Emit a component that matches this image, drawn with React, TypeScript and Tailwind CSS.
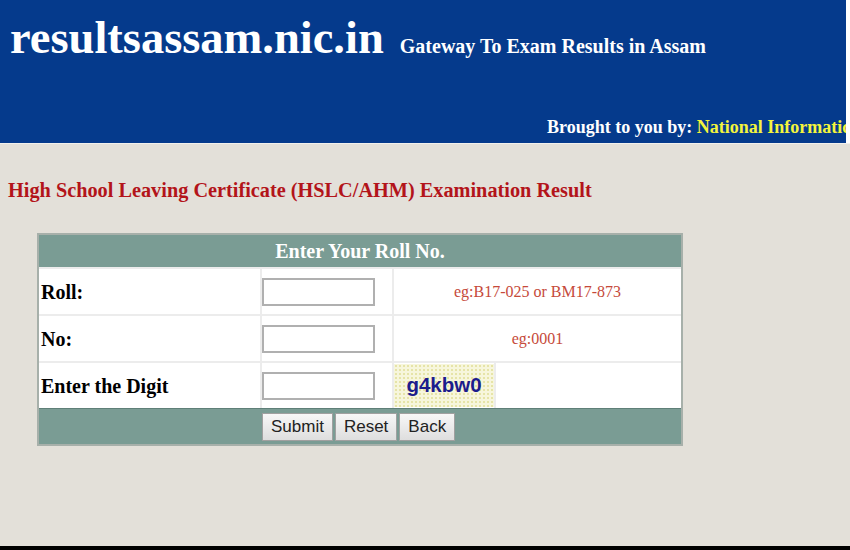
import React from 'react';

const serif = { fontFamily: '"Liberation Serif", "Times New Roman", serif' };
const sans = { fontFamily: '"Liberation Sans", Arial, sans-serif' };

function Field({ label, children }: { label: string; children: React.ReactNode }) {
  return (
    <div className="h-[47px] flex border-t-2 border-[#ececec] bg-white">
      <div className="w-[221px] flex items-center pl-[2px] text-[20px] font-bold text-black" style={serif}>
        {label}
      </div>
      <div className="w-[132px] flex items-center border-l-2 border-[#ececec]">
        <input
          type="text"
          className="w-[113px] h-[28px] border-2 border-[#b0b0b0] bg-white outline-none"
        />
      </div>
      {children}
    </div>
  );
}

function Hint({ text }: { text: string }) {
  return (
    <div
      className="flex-1 flex items-center justify-center border-l-2 border-[#ececec] text-[16px] text-[#c64a3a]"
      style={serif}
    >
      {text}
    </div>
  );
}

export default function App() {
  return (
    <div className="w-[850px] h-[550px] flex flex-col bg-[#e3e0d9] overflow-hidden">
      {/* Header */}
      <header className="h-[143px] bg-[#053a8c] border-r-4 border-white overflow-hidden text-white" style={serif}>
        <div className="flex items-baseline pt-[15px] pl-[10px] whitespace-nowrap">
          <span className="text-[46.5px] leading-[46px] font-bold">resultsassam.nic.in</span>
          <span className="ml-[16px] text-[20px] font-bold">Gateway To Exam Results in Assam</span>
        </div>
        <div className="mt-[57px] ml-[547px] whitespace-nowrap text-[18px] leading-[18px] font-bold">
          Brought to you by: <span className="text-[#f4f43c]">National Informatics Centre</span>
        </div>
      </header>
      <div className="h-[1px] bg-[#f2f0ec]" />

      <main className="flex-1">
        <h2 className="mt-[36px] ml-[8px] text-[20.3px] leading-[20px] font-bold text-[#b3141a]" style={serif}>
          High School Leaving Certificate (HSLC/AHM) Examination Result
        </h2>

        {/* Roll number form */}
        <div className="mt-[33px] ml-[37px] w-[646px] border-2 border-[#a7b0aa]">
          <div
            className="h-[32px] bg-[#7a9c94] flex items-center justify-center text-white text-[20px] font-bold"
            style={serif}
          >
            Enter Your Roll No.
          </div>
          <Field label="Roll:">
            <Hint text="eg:B17-025 or BM17-873" />
          </Field>
          <Field label="No:">
            <Hint text="eg:0001" />
          </Field>
          <Field label="Enter the Digit">
            <div className="w-[102px] flex items-center border-l-2 border-[#ececec]">
              <div
                className="w-[100px] h-[43px] flex items-center justify-center bg-[#f7f6dc] text-[20.5px] font-bold text-[#1c1c8c]"
                style={{
                  ...sans,
                  backgroundImage: 'radial-gradient(#e6e4a8 1px, transparent 1px)',
                  backgroundSize: '4px 4px',
                }}
              >
                g4kbw0
              </div>
            </div>
            <div className="flex-1 border-l-2 border-[#ececec]" />
          </Field>
          <div className="h-[36px] bg-[#7a9c94] flex items-center border-t border-[#5f7f78] pl-[223px] gap-[2px]" style={sans}>
            {['Submit', 'Reset', 'Back'].map((b) => (
              <button
                key={b}
                className="h-[28px] px-[8px] text-[17px] text-[#222] border border-[#a0a0a0] bg-gradient-to-b from-[#f7f7f7] to-[#dedede]"
              >
                {b}
              </button>
            ))}
          </div>
        </div>
      </main>
      <div className="h-[4px] bg-black" />
    </div>
  );
}
